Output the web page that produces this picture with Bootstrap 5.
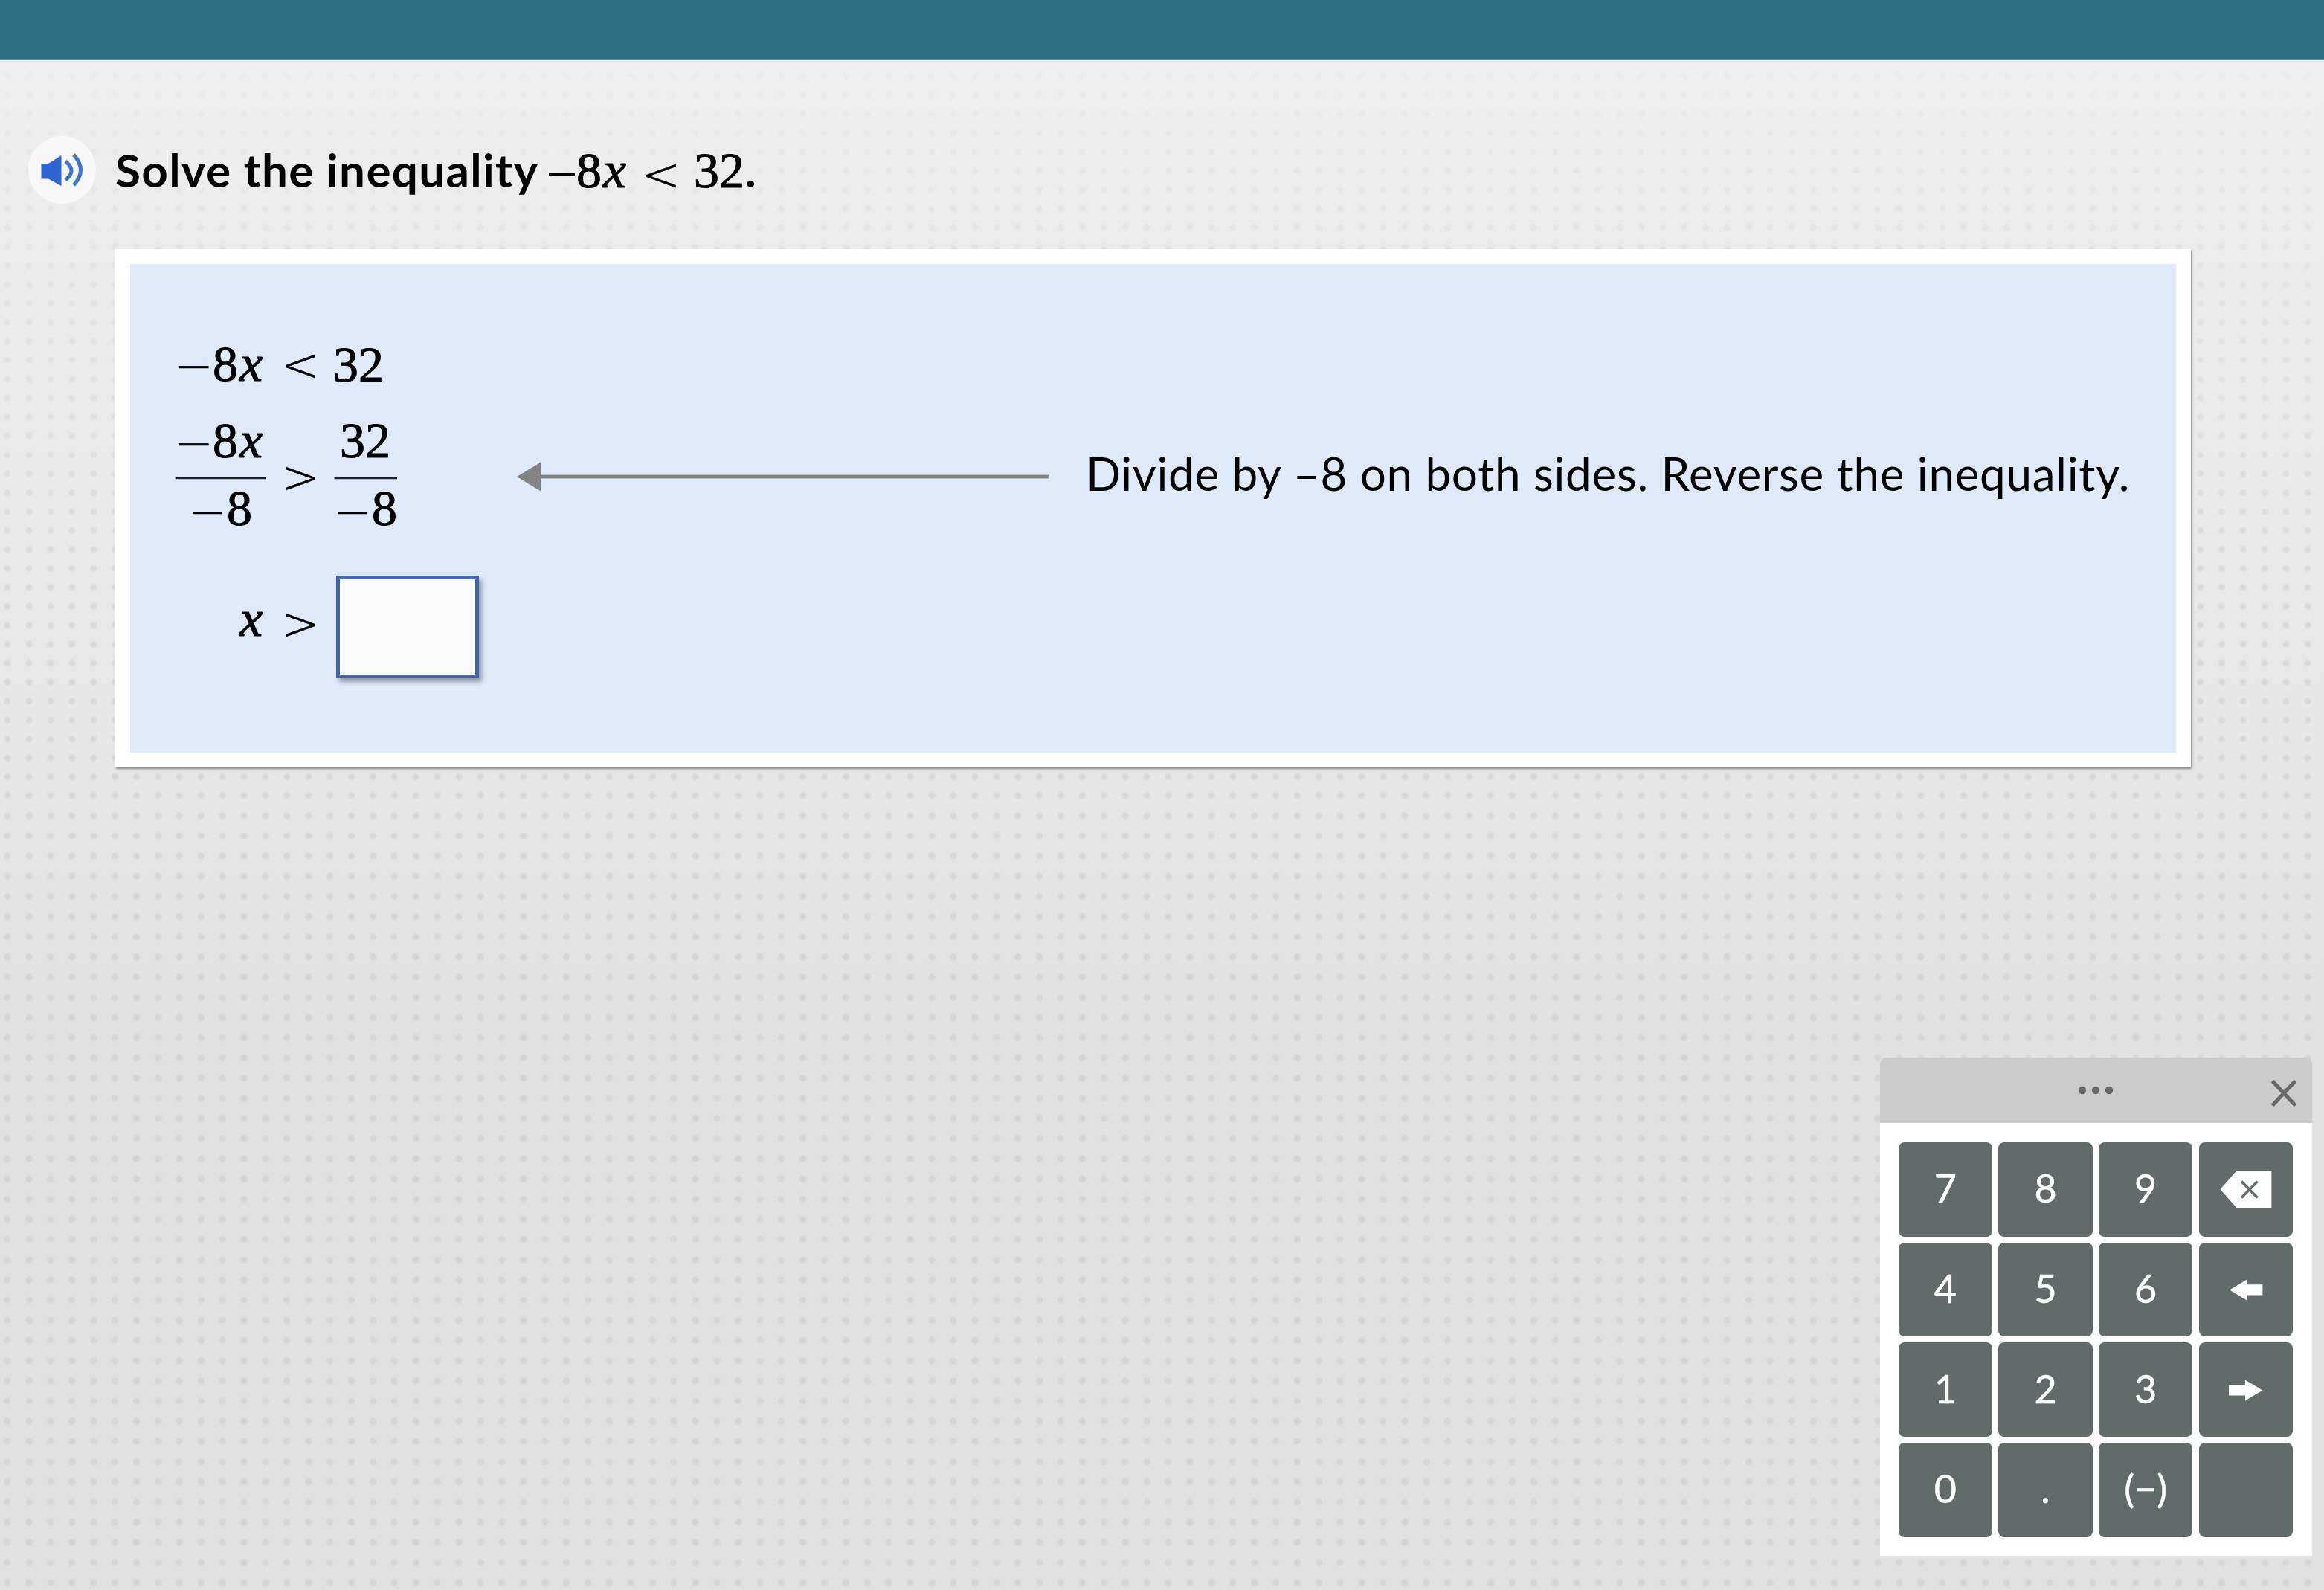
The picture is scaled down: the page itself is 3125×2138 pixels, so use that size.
<!DOCTYPE html>
<html lang="en">
<head>
    <meta charset="UTF-8">
    <meta name="viewport" content="width=device-width, initial-scale=1.0">
    <title>Solve the inequality</title>
    <link href="https://cdn.jsdelivr.net/npm/bootstrap@5.3.0/dist/css/bootstrap.min.css" rel="stylesheet">
    <style>
        body {
            height: 2138px;
            overflow: hidden;
            color: #000;
            font-family: "Lato", "Open Sans", sans-serif;
            background: linear-gradient(#efefef 80px, #e6e6e6 1000px, #e1e1e1 1400px, #e1e1e1);
        }
        .top-bar { height: 81px; background: #2f7083; border-bottom: 1px solid #5a8e9c; }

        /* dotted paper, the lower part has slightly wider row spacing */
        .lesson {
            height: 976px;
            background:
                linear-gradient(rgba(239, 239, 239, .75), rgba(234, 234, 234, .5) 260px, rgba(232, 232, 232, 0) 700px),
                radial-gradient(circle at center, rgba(0, 0, 0, .055) 3.2px, transparent 5.6px) -4.4px 8.5px / 28.92px 25.47px;
        }
        .lower { height: 1081px; background: radial-gradient(circle at center, rgba(0, 0, 0, .05) 3.2px, transparent 5.8px) -4.4px -.9px / 28.92px 27.15px; }

        .question { height: 254px; padding: 102px 0 0 38px; }
        .speaker { width: 91px; height: 91px; background: #f7f7f7; }
        .prompt { margin-left: 26px; font-size: 62px; font-weight: 700; line-height: 91px; white-space: nowrap; }
        .prompt span { width: 567px; letter-spacing: 1.3px; }

        .math { display: block; overflow: visible; flex: none; }
        .math text { font-family: "Liberation Serif", serif; font-size: 68px; font-weight: 400; stroke: #000; stroke-width: 1px; }
        .math .var { font-style: italic; font-size: 70px; }
        .math .sign { font-family: "DejaVu Sans", sans-serif; font-weight: 200; font-size: 62px; stroke-width: .7px; }
        .math .dash { stroke: none; }
        .math .stop { font-family: "Lato", sans-serif; font-weight: 700; font-size: 62px; stroke: none; }
        .math line { stroke: #222; stroke-width: 2.6px; }

        .work-panel { width: 2791px; height: 697px; margin-left: 155px; padding: 100px 0 0 60px; border: 20px solid #fff; background: #dee9fa; box-shadow: 1px 2px 3px rgba(0, 0, 0, .45); }
        .arrow { margin: 166px 0 0 150px; flex: none; }
        .note { margin: 136px 0 0 49px; font-size: 62px; line-height: 90px; letter-spacing: .7px; white-space: nowrap; }
        .answer-row { margin-top: 54px; }
        .answer-box { width: 192px; height: 138px; border: 5px solid #3f66aa; border-radius: 0; background: #fafafa; box-shadow: 4px 5px 6px rgba(0, 0, 0, .35); }

        .keypad { position: absolute; left: 2527.5px; top: 1422px; width: 581px; height: 670px; border-radius: 8px 8px 0 0; }
        .keypad-head { height: 88px; background: #cbcbcb; }
        .keys { grid-template-columns: repeat(4, 126.6px); grid-template-rows: repeat(4, 126.6px); gap: 8.1px; padding: 26px 25px; }
        .key { background: #626b69; color: #fff; border: 0; border-radius: 8px; padding: 0 0 4px; font-size: 52px; line-height: 1; -webkit-text-stroke: .5px #fff; }
        .key svg { display: block; margin-bottom: -4px; }
    </style>
</head>
<body>
    <header class="top-bar"></header>

    <div class="lesson">
        <section class="question d-flex">
            <button class="speaker btn rounded-circle border-0 p-0" aria-label="Listen">
                <svg class="d-block" width="91" height="91" viewBox="0 0 91 91" fill="none" stroke="#3b77cf" stroke-width="5">
                    <path d="M17.5 37H27L44.500 26v41L27 57.500H17.500z" fill="#2c66d3" stroke="none"/>
                    <path d="M50 34q16 12.500 0 25M61 25q19 20.500 0 41"/>
                </svg>
            </button>
            <h1 class="prompt d-flex mb-0">
                <span>Solve the inequality</span>
                <svg class="math" width="300" height="91" viewBox="722 183 300 91">
                    <text class="dash" x="738.500" y="250">–</text>
                    <text x="775" y="252">8</text>
                    <text class="var" x="811" y="252">x</text>
                    <text class="sign" x="863" y="256">&lt;</text>
                    <text x="933" y="252">32</text>
                    <text class="stop" x="1002" y="252">.</text>
                </svg>
            </h1>
        </section>

        <main class="work-panel">
            <div class="d-flex align-items-start">
                <svg class="math" width="310" height="265" viewBox="235 455 310 265">
                    <!-- -8x < 32 -->
                    <text class="sign" x="235" y="513">−</text>
                    <text x="286" y="512">8</text>
                    <text class="var" x="322" y="512">x</text>
                    <text class="sign" x="378" y="512">&lt;</text>
                    <text x="448" y="513">32</text>
                    <!-- both sides over -8 -->
                    <text class="sign" x="235" y="617">−</text>
                    <text x="286" y="615">8</text>
                    <text class="var" x="322" y="615">x</text>
                    <line x1="235.700" y1="643" x2="358" y2="643"/>
                    <text class="sign" x="253" y="709">−</text>
                    <text x="305" y="706">8</text>
                    <text class="sign" x="378" y="663">&gt;</text>
                    <text x="457" y="615">32</text>
                    <line x1="449.600" y1="643" x2="534" y2="643"/>
                    <text class="sign" x="448" y="709">−</text>
                    <text x="500" y="706">8</text>
                </svg>
                <svg class="arrow" width="716" height="40" viewBox="0 0 716 40" fill="#838383">
                    <path d="M0 20L32 .500v39zM31 17.500h685v5H31z"/>
                </svg>
                <div class="note">Divide by –8 on both sides. Reverse the inequality.</div>
            </div>
            <div class="answer-row d-flex">
                <svg class="math" width="217" height="138" viewBox="235 774 217 138">
                    <text class="var" x="322" y="854.500">x</text>
                    <text class="sign" x="378" y="859.500">&gt;</text>
                </svg>
                <input class="answer-box form-control" type="text" aria-label="Answer">
            </div>
        </main>
    </div>
    <div class="lower"></div>

    <aside class="keypad bg-white overflow-hidden">
        <div class="keypad-head">
            <svg class="d-block" width="581" height="88" viewBox="0 0 581 88" fill="#686868">
                <circle cx="272" cy="44" r="5.200"/><circle cx="290" cy="44" r="5.200"/><circle cx="308" cy="44" r="5.200"/>
                <path d="M527.500 31.500l31 33M558.500 31.500l-31 33" stroke="#686868" stroke-width="5"/>
            </svg>
        </div>
        <div class="keys d-grid">
            <button class="key">7</button>
            <button class="key">8</button>
            <button class="key">9</button>
            <button class="key" aria-label="Delete">
                <svg width="126" height="126" viewBox="0 0 126 126">
                    <path d="M28.500 63.200L50.400 38.300h47V88h-47z" fill="#fff"/>
                    <path d="M57 52.500l21.500 22M78.500 52.500L57 74.500" stroke="#626b69" stroke-width="3.600"/>
                </svg>
            </button>
            <button class="key">4</button>
            <button class="key">5</button>
            <button class="key">6</button>
            <button class="key" aria-label="Left">
                <svg width="126" height="126" viewBox="0 0 126 126">
                    <path d="M41 63.400l23.400-14v6.800h21v14.200h-21v7z" fill="#fff"/>
                </svg>
            </button>
            <button class="key">1</button>
            <button class="key">2</button>
            <button class="key">3</button>
            <button class="key" aria-label="Right">
                <svg width="126" height="126" viewBox="0 0 126 126">
                    <path d="M85.500 63.400l-23.600-14v6.800H40v14.200h21.900v7z" fill="#fff"/>
                </svg>
            </button>
            <button class="key">0</button>
            <button class="key">.</button>
            <button class="key">(−)</button>
            <button class="key" aria-label="Blank"></button>
        </div>
    </aside>
    <script src="https://cdn.jsdelivr.net/npm/bootstrap@5.3.0/dist/js/bootstrap.bundle.min.js"></script>
</body>
</html>
